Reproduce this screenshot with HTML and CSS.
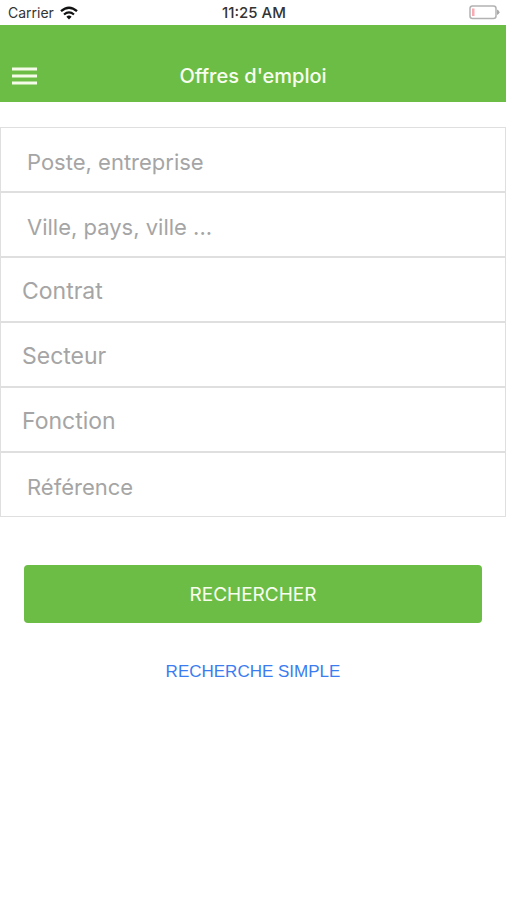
FILE: index.html
```html
<!DOCTYPE html>
<html lang="fr">
<head>
<meta charset="utf-8">
<meta name="viewport" content="width=device-width, initial-scale=1">
<title>Offres d'emploi</title>
<link rel="stylesheet" href="styles.css">
</head>
<body>
<div class="status-bar">
  <div class="carrier">
    <span>Carrier</span>
    <svg class="wifi" width="18" height="14" viewBox="0 0 18 14" aria-hidden="true">
      <path d="M1 5.2Q9-1.8 17 5.2" fill="none" stroke="#111" stroke-width="2.3"/>
      <path d="M4 8.5Q9 4.3 14 8.5" fill="none" stroke="#111" stroke-width="2.2"/>
      <path d="M6.4 10.7Q9 8.5 11.6 10.7L9 13.4Z" fill="#111"/>
    </svg>
  </div>
  <time class="clock">11:25 AM</time>
  <svg class="battery" width="31" height="15" viewBox="0 0 31 15" aria-hidden="true">
    <rect x="1" y="1" width="26" height="12.5" rx="2.5" fill="#fff" stroke="#b3b2b3" stroke-width="1.5"/>
    <rect x="3" y="3.5" width="2.5" height="7.5" fill="#f9aab2"/>
    <path d="M28 4.5Q30.5 5.5 30.5 7.2Q30.5 9 28 10Z" fill="#aaa"/>
  </svg>
</div>
<header class="nav-bar">
  <button class="menu" type="button" aria-label="Menu">
    <svg width="26" height="20" viewBox="0 0 26 20" aria-hidden="true">
      <path d="M0 3H25M0 10H25M0 17H25" stroke="#f4fbe9" stroke-width="3"/>
    </svg>
  </button>
  <h1 class="title">Offres d'emploi</h1>
</header>
<main>
  <form class="search">
    <div class="fields">
      <input class="field" type="text" placeholder="Poste, entreprise" aria-label="Poste, entreprise">
      <input class="field" type="text" placeholder="Ville, pays, ville ..." aria-label="Ville, pays, ville">
      <select class="field picker" aria-label="Contrat"><option>Contrat</option></select>
      <select class="field picker" aria-label="Secteur"><option>Secteur</option></select>
      <select class="field picker" aria-label="Fonction"><option>Fonction</option></select>
      <input class="field" type="text" placeholder="Référence" aria-label="Référence">
    </div>
    <div class="actions">
      <button class="submit" type="submit">RECHERCHER</button>
      <a class="simple" href="#">RECHERCHE SIMPLE</a>
    </div>
  </form>
</main>
</body>
</html>
```
FILE: styles.css
```css
* {
  box-sizing: border-box;
}

body {
  margin: 0;
  background: #fff;
  font-family: Inter, "Liberation Sans", sans-serif;
}

.status-bar {
  display: grid;
  grid-template-columns: 1fr auto 1fr;
  align-items: center;
  height: 25px;
  padding: 0 6px 0 8px;
  color: #333;
  font-size: 14px;
}

.carrier {
  display: flex;
  align-items: center;
  gap: 6px;
}

.clock {
  font-size: 15px;
  font-weight: 500;
}

.battery {
  justify-self: end;
}

.nav-bar {
  display: grid;
  grid-template-columns: 1fr auto 1fr;
  align-items: end;
  height: 77px;
  padding: 0 12px 12px;
  background: #6cbd45;
}

.menu {
  display: flex;
  justify-self: start;
  padding: 0 0 4px;
  border: 0;
  background: none;
}

.title {
  margin: 0;
  color: #f8fdf0;
  font-size: 20px;
  font-weight: 500;
  line-height: 28px;
}

.fields {
  display: flex;
  flex-direction: column;
  margin-top: 25px;
}

.field {
  width: 100%;
  height: 65px;
  padding: 5px 26px 0;
  border: 1px solid #dfdfdf;
  border-radius: 0;
  background: #fff;
  color: #a5a5a5;
  font-family: inherit;
  font-size: 22px;
  appearance: none;
}

.field::placeholder {
  color: #a5a5a5;
}

.picker {
  padding: 3px 21px 0;
  font-size: 23px;
}

.actions {
  display: flex;
  flex-direction: column;
  align-items: center;
  gap: 36px;
  padding: 48px 24px;
}

.submit {
  width: 100%;
  height: 58px;
  border: 0;
  border-radius: 4px;
  background: #6cbd45;
  color: #f8fdf0;
  font-family: inherit;
  font-size: 19px;
}

.simple {
  color: #3b7cf0;
  font-family: "Liberation Sans", sans-serif;
  font-size: 17px;
  line-height: 26px;
  text-decoration: none;
}
```
